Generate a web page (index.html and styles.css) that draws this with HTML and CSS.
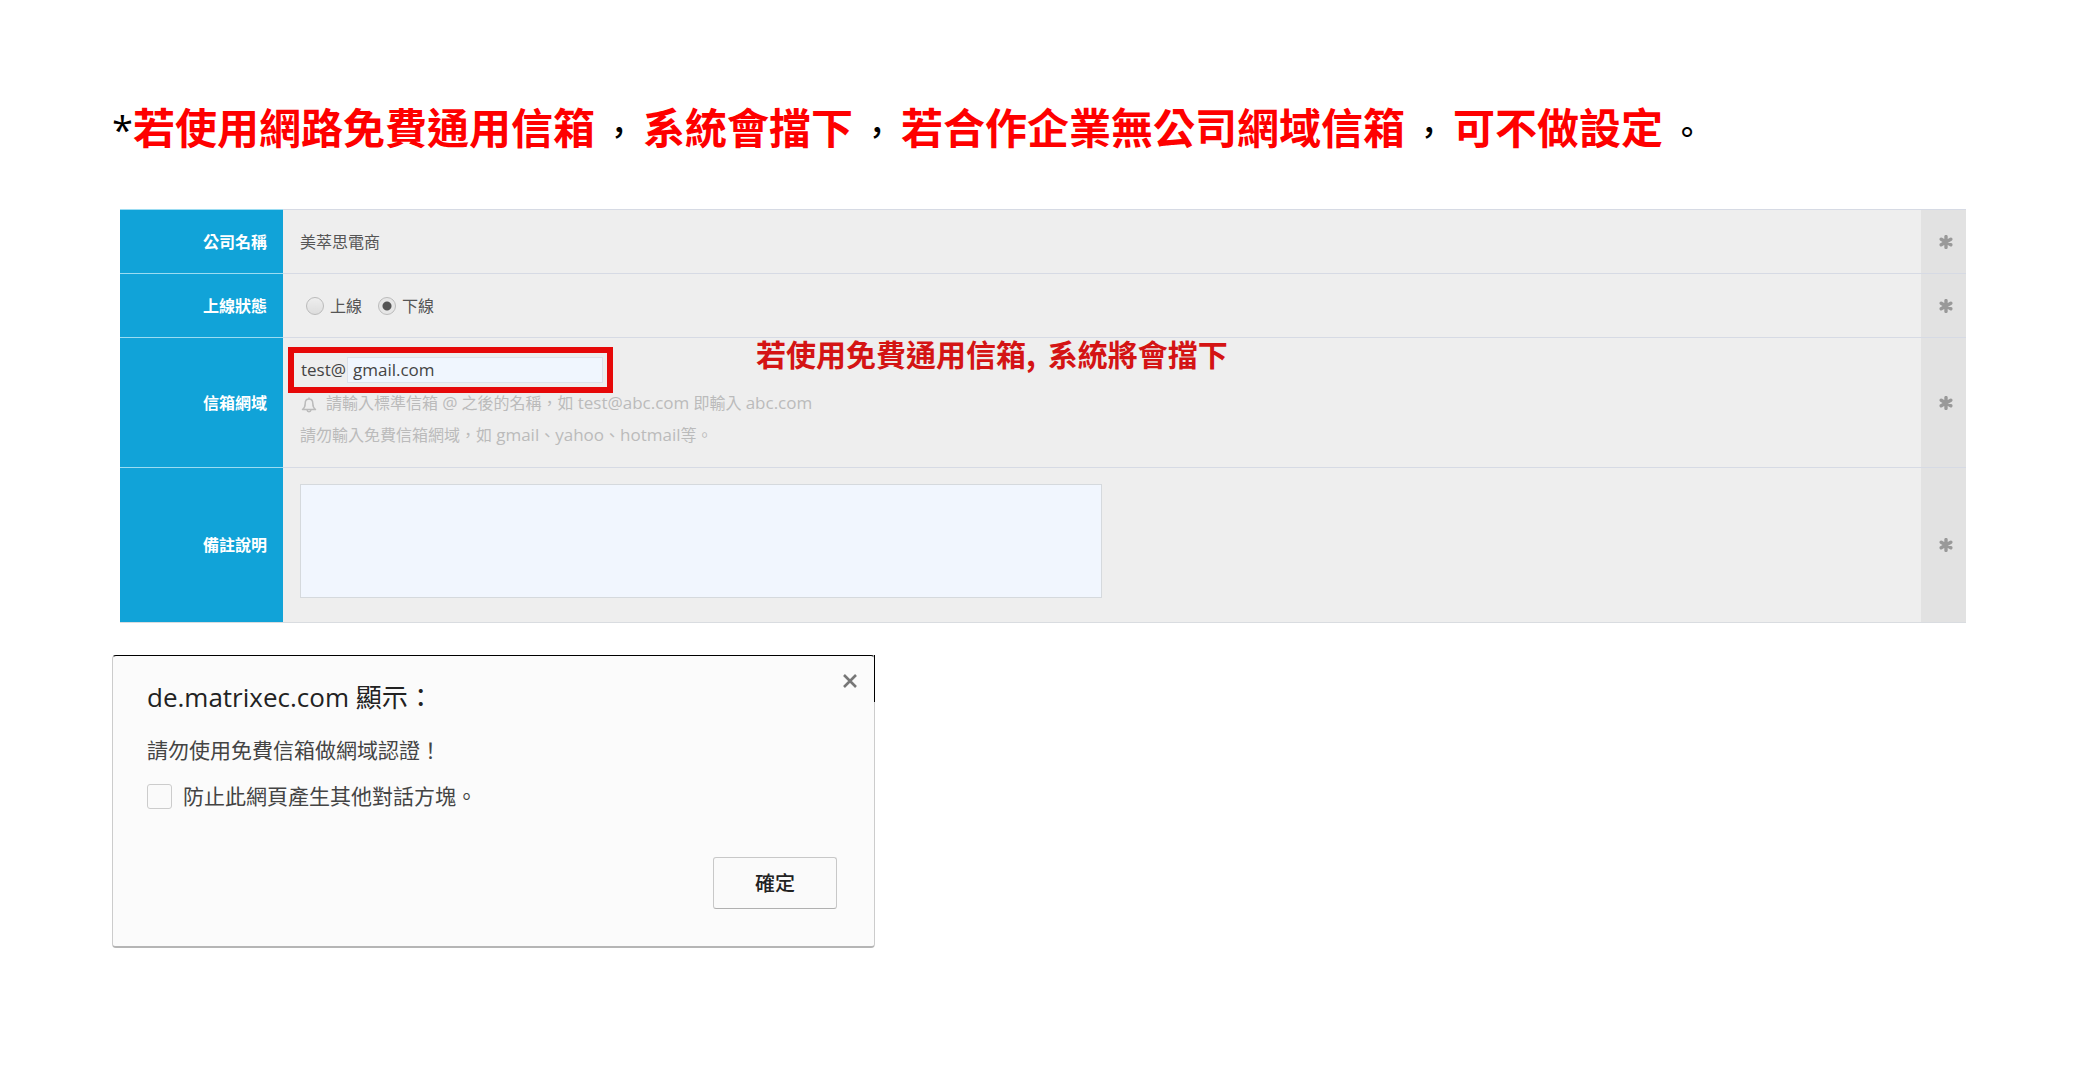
FILE: index.html
```html
<!DOCTYPE html>
<html lang="zh-Hant">
<head>
<meta charset="utf-8">
<title>信箱網域設定</title>
<link rel="stylesheet" href="styles.css">
</head>
<body>
<main class="page">
  <h1 class="notice"><span class="notice-mark">*</span>若使用網路免費通用信箱<span class="punct">，</span>系統會擋下<span class="punct">，</span>若合作企業無公司網域信箱<span class="punct">，</span>可不做設定<span class="punct">。</span></h1>

  <svg class="sprite" aria-hidden="true">
    <symbol id="asterisk" viewBox="0 0 14 14">
      <path d="M7 1.6v10.8M2.2 4.2l9.6 5.6M11.8 4.2L2.2 9.8" fill="none" stroke="currentColor" stroke-width="3.4" stroke-linecap="round"/>
    </symbol>
  </svg>

  <form>
    <table class="settings">
      <tr class="row">
        <th scope="row">公司名稱</th>
        <td>美萃思電商</td>
        <td class="required"><svg class="star"><use href="#asterisk"/></svg></td>
      </tr>
      <tr class="row">
        <th scope="row">上線狀態</th>
        <td>
          <div class="radios">
            <label class="radio"><input type="radio" name="status">上線</label>
            <label class="radio"><input type="radio" name="status" checked>下線</label>
          </div>
        </td>
        <td class="required"><svg class="star"><use href="#asterisk"/></svg></td>
      </tr>
      <tr class="row-domain">
        <th scope="row"><label for="domain">信箱網域</label></th>
        <td>
          <div class="domain">
            <div class="highlight"><label for="domain">test@</label><input id="domain" class="domain-input" type="text" value="gmail.com"></div>
            <strong class="annotation">若使用免費通用信箱<span class="annotation-comma">,</span>系統將會擋下</strong>
          </div>
          <p class="hint"><svg class="bell" viewBox="0 0 16 16" aria-hidden="true"><path d="M1.500 12.500c2-1.500 2.700-3 2.700-6C4.200 3.500 5.700 2 8 2s3.800 1.500 3.800 4.500c0 3 .7 4.500 2.700 6zM8 .5V2M6 13c.3 2.200 3.700 2.200 4 0" fill="none" stroke="currentColor" stroke-width="1.500" stroke-linejoin="round"/></svg>請輸入標準信箱 <span class="latin">@</span> 之後的名稱，如 <span class="latin">test@abc.com</span> 即輸入 <span class="latin">abc.com</span></p>
          <p class="hint">請勿輸入免費信箱網域，如 <span class="latin">gmail</span>、<span class="latin">yahoo</span>、<span class="latin">hotmail</span>等。</p>
        </td>
        <td class="required"><svg class="star"><use href="#asterisk"/></svg></td>
      </tr>
      <tr class="row-note">
        <th scope="row"><label for="note">備註說明</label></th>
        <td><textarea id="note" class="note"></textarea></td>
        <td class="required"><svg class="star"><use href="#asterisk"/></svg></td>
      </tr>
    </table>
  </form>

  <section class="dialog" role="dialog" aria-labelledby="dialog-title">
    <header class="dialog-head">
      <h2 class="dialog-title" id="dialog-title">de.matrixec.com 顯示：</h2>
      <button class="close" type="button" aria-label="關閉"><svg viewBox="0 0 14 14" width="14" height="14"><path d="M1 1l12 12M13 1L1 13" stroke="currentColor" stroke-width="2.600"/></svg></button>
    </header>
    <p class="dialog-text">請勿使用免費信箱做網域認證！</p>
    <label class="dialog-check"><input type="checkbox">防止此網頁產生其他對話方塊。</label>
    <div class="dialog-actions"><button class="ok" type="button">確定</button></div>
  </section>
</main>
</body>
</html>
```
FILE: styles.css
```css
* { box-sizing: border-box; }

body {
  margin: 0;
  background: #fff;
  color: #555;
  font: 16px/32px "Open Sans", "Noto Sans CJK TC", sans-serif;
}

.page { padding: 94px 124px 96px 112px; }

.notice {
  margin: 0 0 47px;
  color: #fe0000;
  font: bold 42px/64px "Noto Sans CJK TC", sans-serif;
}
.notice-mark, .punct { color: #000; }
.notice-mark { font-family: "Open Sans", sans-serif; font-weight: 400; font-size: 38px; }
.punct { margin: 0 8px; font-size: 32px; font-weight: 500; }

.sprite { display: none; }

.settings {
  width: calc(100% - 8px);
  margin-left: 8px;
  border-collapse: collapse;
  table-layout: fixed;
  border-bottom: 1px solid #d9dce0;
}
.settings th, .settings td { border-top: 1px solid #d6dae4; }
.settings th {
  width: 163px;
  padding: 0 16px;
  background: #11a3d8;
  border-top-color: #9bdcf2;
  color: #fff;
  text-align: right;
}
.settings td { padding: 0 17px; background: #eee; }
.settings .required {
  width: 45px;
  padding: 0 0 0 5px;
  background: #e2e2e2;
  color: #999;
  text-align: center;
}
.star { display: block; width: 14px; height: 14px; margin: 0 auto; }
.row { height: 64px; }
.row-domain { height: 130px; }
.row-note { height: 155px; }
.settings .row-domain td, .settings .row-note td { vertical-align: top; }
.settings .row-domain .required, .settings .row-note .required { vertical-align: middle; }

.radios { display: flex; gap: 16px; padding-left: 6px; }
.radio { display: flex; align-items: center; gap: 6px; }
.radio input {
  appearance: none;
  width: 18px;
  height: 18px;
  margin: 0;
  border: 1px solid #bbb;
  border-radius: 50%;
  background: linear-gradient(#eee, #ddd);
}
.radio input:checked { background: radial-gradient(circle, #555 4px, #e6e6e6 5px); }

.domain { position: relative; padding-top: 9px; }
.highlight {
  display: flex;
  align-items: center;
  width: 325px;
  height: 46px;
  margin-left: -12px;
  padding: 0 4px 0 7px;
  border: 6px solid #e60808;
  color: #444;
  font-size: 17px;
}
.domain-input {
  flex: 1;
  min-width: 0;
  height: 26px;
  margin-left: 1px;
  padding: 0 5px;
  border: 1px solid #dde1ea;
  background: #f0f6fe;
  color: #444;
  font: inherit;
}
.annotation {
  position: absolute;
  top: 0;
  left: 456px;
  color: #d41414;
  font: bold 30px/30px "Noto Sans CJK TC", sans-serif;
  white-space: nowrap;
}
.annotation-comma { margin-right: 12px; }

.hint { margin: 0; color: #bbb; }
.hint:first-of-type { margin-top: -6px; }
.latin { font-size: 17px; }
.bell {
  width: 16px;
  height: 18px;
  margin: 0 9px 0 1px;
  vertical-align: middle;
}

.note {
  display: block;
  width: 802px;
  max-width: 100%;
  height: 114px;
  margin-top: 16px;
  border: 1px solid #d5d9dd;
  background: #f1f6fe;
  resize: none;
}

.dialog {
  position: relative;
  width: 763px;
  margin-top: 32px;
  padding: 18px 37px 37px 34px;
  border: 1px solid #ccc;
  border-top-color: #000;
  border-bottom: 2px solid #b5b5b5;
  border-radius: 4px;
  background: #fbfbfb;
  color: #444;
  font-size: 21px;
}
/* Dark edge at the top right corner of the dialog */
.dialog::after {
  content: "";
  position: absolute;
  top: -1px;
  right: -1px;
  width: 1px;
  height: 47px;
  background: #000;
}
.dialog-head { display: flex; justify-content: space-between; }
.dialog-title { margin: 0; color: #222; font-size: 26px; font-weight: 400; line-height: 46px; }
.close {
  width: 14px;
  height: 14px;
  margin-right: -20px;
  padding: 0;
  border: 0;
  background: none;
  color: #777;
}
.close svg { display: block; }
.dialog-text { margin: 14px 0; }
.dialog-check { display: flex; align-items: center; gap: 11px; }
.dialog-check input {
  appearance: none;
  width: 25px;
  height: 25px;
  margin: 0;
  border: 1px solid #ccc;
  border-radius: 3px;
  background: #fafafa;
}
.dialog-actions { display: flex; justify-content: flex-end; margin-top: 45px; }
.ok {
  width: 124px;
  height: 52px;
  border: 1px solid #c8c8c8;
  border-bottom-color: #b0b0b0;
  border-radius: 3px;
  background: #fafafa;
  color: #222;
  font: 500 20px/32px "Noto Sans CJK TC", sans-serif;
}
```
